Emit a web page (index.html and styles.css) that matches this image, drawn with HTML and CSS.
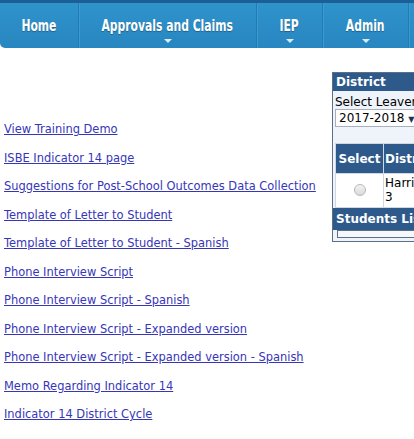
FILE: index.html
```html
<!DOCTYPE html>
<html lang="en">

<head>
  <meta charset="UTF-8">
  <meta name="viewport" content="width=device-width, initial-scale=1.0">
  <title>Indicator 14</title>
  <link rel="stylesheet" href="styles.css">
</head>

<body>
  <div class="nav">
    <div class="nav-item"><span>Home</span></div>
    <div class="nav-item has-menu" style="width: 178px"><span>Approvals and Claims</span></div>
    <div class="nav-item has-menu" style="width: 66px"><span>IEP</span></div>
    <div class="nav-item has-menu" style="width: 86px"><span>Admin</span></div>
    <div class="nav-item"></div>
  </div>

  <div class="page">
    <div class="links">
      <a href="#">View Training Demo</a>
      <a href="#">ISBE Indicator 14 page</a>
      <a href="#">Suggestions for Post-School Outcomes Data Collection</a>
      <a href="#">Template of Letter to Student</a>
      <a href="#">Template of Letter to Student - Spanish</a>
      <a href="#">Phone Interview Script</a>
      <a href="#">Phone Interview Script - Spanish</a>
      <a href="#">Phone Interview Script - Expanded version</a>
      <a href="#">Phone Interview Script - Expanded version - Spanish</a>
      <a href="#">Memo Regarding Indicator 14</a>
      <a href="#">Indicator 14 District Cycle</a>
    </div>

    <div class="panel">
      <div class="panel-head">District</div>
      <div class="panel-body">
        <div class="label">Select Leaver Year</div>
        <div class="select">2017-2018 <span class="caret">&#9660;</span></div>
        <table class="grid">
          <tr>
            <th class="col-select">Select</th>
            <th>District Name</th>
          </tr>
          <tr>
            <td class="col-select"><span class="radio"></span></td>
            <td>Harrisburg CUSD<br>3</td>
          </tr>
        </table>
        <div class="panel-head sub">Students List</div>
        <div class="sub-body"></div>
      </div>
    </div>
  </div>
</body>

</html>
```

FILE: styles.css
```css
* {
  padding: 0;
  margin: 0;
  box-sizing: border-box;
}

body {
  font-family: "DejaVu Sans", Verdana, sans-serif;
  background: #fff;
  overflow: hidden;
  width: 414px;
}

.nav {
  display: flex;
  width: 600px;
  height: 48px;
  background: linear-gradient(#2f93cc, #2886c0);
  border-top: 3px solid #1b5f96;
  border-bottom-left-radius: 5px;
}

.nav-item {
  position: relative;
  width: 79px;
  color: #fff;
  font-family: "DejaVu Sans Condensed", sans-serif;
  font-weight: bold;
  font-size: 15px;
  text-align: center;
  line-height: 47px;
  border-right: 1px solid #237bb3;
  box-shadow: 1px 0 0 #3a9ad2;
  text-shadow: 0 1px 1px rgba(0, 0, 0, 0.3);
  white-space: nowrap;
}

/* the original menu font is narrower than anything installed */
.nav-item span {
  display: inline-block;
  transform: scaleX(0.8);
}

.nav-item:last-child {
  flex: 1;
  border-right: none;
  box-shadow: none;
}

.has-menu::after {
  content: "";
  position: absolute;
  left: 50%;
  bottom: 5px;
  margin-left: -4px;
  border-left: 4px solid transparent;
  border-right: 4px solid transparent;
  border-top: 4px solid #d8ecf8;
}

.page {
  display: flex;
  align-items: flex-start;
}

.links {
  display: flex;
  flex-direction: column;
  width: 332px;
  flex-shrink: 0;
  padding: 67px 0 0 4px;
}

.links a {
  font-size: 11.45px;
  line-height: 28.5px;
  color: #3636b8;
  text-decoration: underline;
  white-space: nowrap;
}

.panel {
  margin-top: 24px;
  width: 200px;
  flex-shrink: 0;
  border: 1px solid #5b6f86;
  background: #eef4fa;
}

.panel-head {
  background: #2d5a8b;
  color: #fff;
  font-weight: bold;
  font-size: 12px;
  line-height: 18px;
  padding-left: 3px;
}

.panel-body {
  padding: 4px 0 3px 2px;
  font-size: 12px;
}

.label {
  line-height: 14px;
}

.select {
  width: 90px;
  height: 18px;
  border: 1px solid #a7b1bd;
  background: #fff;
  line-height: 16px;
  padding-left: 3px;
  font-size: 12px;
}

.caret {
  font-size: 8px;
  color: #1d3552;
}

.grid {
  margin-top: 16px;
  border-collapse: collapse;
  font-size: 12px;
}

.grid th {
  background: #2d5a8b;
  color: #fff;
  text-align: left;
  height: 30px;
  padding: 0 1px;
  border: 1px solid #cfd8e2;
  white-space: nowrap;
}

.grid td {
  background: #fff;
  height: 34px;
  vertical-align: top;
  padding: 2px 1px 0;
  border: 1px solid #cfd8e2;
  line-height: 14px;
}

.grid .col-select {
  width: 48px;
  text-align: center;
  vertical-align: middle;
}

.radio {
  display: inline-block;
  width: 12px;
  height: 12px;
  border-radius: 50%;
  border: 1px solid #b8b8b8;
  background: linear-gradient(#f4f4f4, #d9d9d9);
}

.sub {
  margin-left: -2px;
  line-height: 22px;
  font-size: 12px;
}

.sub-body {
  height: 8px;
  border: 1px solid #5b6f86;
  background: #f6f9fc;
  margin-left: 2px;
}
```
